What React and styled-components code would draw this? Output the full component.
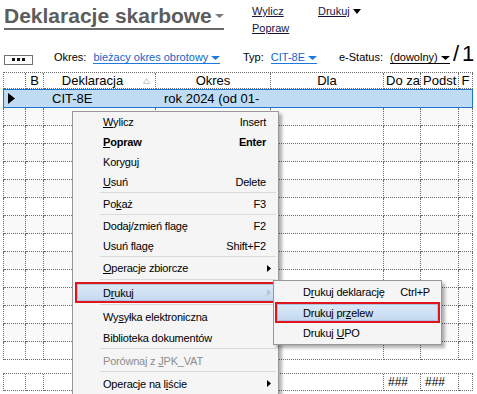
import styled, { createGlobalStyle, css } from 'styled-components';

const GlobalStyle = createGlobalStyle`
    html,
    body {
        margin: 0;
        padding: 0;
        width: 477px;
        height: 394px;
        overflow: hidden;
        background: #ffffff;
    }
    body {
        font-family: "Liberation Sans", Arial, sans-serif;
        color: #000000;
    }
`;

const COLUMNS = '22px 18px 112px 115px 113px 37px 38px 14px';
const EMPTY_ROWS = 14;

const Caret = ({ color = '#000000', w = 8, h = 4 }) => (
    <CaretSvg width={w} height={h} viewBox={`0 0 ${w} ${h}`}>
        <polygon points={`0,0 ${w},0 ${w / 2},${h}`} fill={color} />
    </CaretSvg>
);

const SubArrow = ({ color = '#000000' }) => (
    <svg width="4" height="7" viewBox="0 0 4 7">
        <polygon points="0,0 4,3.5 0,7" fill={color} />
    </svg>
);

const Item = ({ label, shortcut, arrow, ...rest }) => (
    <MenuItem {...rest}>
        <span>{label}</span>
        <Shortcut>{shortcut}</Shortcut>
        <ArrowCell>{arrow && <SubArrow color={arrow} />}</ArrowCell>
    </MenuItem>
);

const App = () => {
    const rows = Array.from({ length: EMPTY_ROWS }, (_, i) => i);
    return (
        <Page>
            <GlobalStyle />
            <TopBar>
                <Title>
                    Deklaracje skarbowe
                    <Caret color="#7a7a7a" w={9} h={4} />
                </Title>
                <LinkStack>
                    <ActionLink>Wylicz</ActionLink>
                    <ActionLink>Popraw</ActionLink>
                </LinkStack>
                <LinkStack>
                    <span>
                        <ActionLink>Drukuj</ActionLink>
                        <Caret w={8} h={5} />
                    </span>
                </LinkStack>
            </TopBar>

            <FilterRow>
                <FilterCell $width={50}>
                    <DotsButton>
                        <svg width="13" height="3" viewBox="0 0 13 3">
                            <rect x="0" y="0" width="3" height="3" fill="#111" />
                            <rect x="5" y="0" width="3" height="3" fill="#111" />
                            <rect x="10" y="0" width="3" height="3" fill="#111" />
                        </svg>
                    </DotsButton>
                </FilterCell>
                <FilterCell $width={189}>
                    <Label>Okres:</Label>
                    <Picker $blue>
                        bieżacy okres obrotowy
                        <Caret color="#1a7ae0" w={9} h={4} />
                    </Picker>
                </FilterCell>
                <FilterCell $width={96}>
                    <Label>Typ:</Label>
                    <Picker $blue>
                        CIT-8E
                        <Caret color="#1a7ae0" w={9} h={4} />
                    </Picker>
                </FilterCell>
                <FilterCell $width={112}>
                    <Label>e-Status:</Label>
                    <Picker>
                        (dowolny)
                        <Caret w={9} h={4} />
                    </Picker>
                </FilterCell>
                <PageCount>/1</PageCount>
            </FilterRow>

            <Grid>
                <HeaderRow>
                    <HeadCell />
                    <HeadCell>B</HeadCell>
                    <HeadCell $padRight={14}>
                        Deklaracja
                        <SortMark width="7" height="6" viewBox="0 0 7 6">
                            <polygon
                                points="3.5,0.5 6.5,5.5 0.5,5.5"
                                fill="none"
                                stroke="#c4c4c4"
                                strokeWidth="1"
                            />
                        </SortMark>
                    </HeadCell>
                    <HeadCell>Okres</HeadCell>
                    <HeadCell>Dla</HeadCell>
                    <HeadCell $left>Do za</HeadCell>
                    <HeadCell $left>Podst</HeadCell>
                    <HeadCell>F</HeadCell>
                </HeaderRow>

                <SelectedRow>
                    <PointerCell>
                        <svg width="7" height="11" viewBox="0 0 7 11">
                            <polygon points="0,0 7,5.5 0,11" fill="#000" />
                        </svg>
                    </PointerCell>
                    <DataCell />
                    <DataCell>CIT-8E</DataCell>
                    <DataCell>rok 2024 (od 01-</DataCell>
                    <DataCell />
                    <DataCell />
                    <DataCell />
                    <DataCell />
                </SelectedRow>

                {rows.map((i) => (
                    <BodyRow key={i} $shaded={i % 2 === 0}>
                        {Array.from({ length: 8 }, (_, c) => (
                            <GridCell key={c} />
                        ))}
                    </BodyRow>
                ))}

                <FooterRow>
                    <GridCell />
                    <GridCell />
                    <GridCell />
                    <GridCell />
                    <GridCell />
                    <SumCell>###</SumCell>
                    <SumCell>###</SumCell>
                    <GridCell />
                </FooterRow>
            </Grid>

            <ContextMenu>
                <Item label={<><Key>W</Key>ylicz</>} shortcut="Insert" />
                <Item label={<><Key>P</Key>opraw</>} shortcut="Enter" $bold />
                <Item label={<>Korygu<Key>j</Key></>} />
                <Item label={<><Key>U</Key>suń</>} shortcut="Delete" />
                <Separator />
                <Item label={<>Po<Key>k</Key>aż</>} shortcut="F3" />
                <Separator />
                <Item label={<>Dodaj/zmień fla<Key>g</Key>ę</>} shortcut="F2" />
                <Item label={<>Usuń fla<Key>g</Key>ę</>} shortcut="Shift+F2" />
                <Separator />
                <Item label={<><Key>O</Key>peracje zbiorcze</>} arrow="#000000" />
                <Separator $size={4} />
                <Item label={<>D<Key>r</Key>ukuj</>} arrow="#b8c4d0" $marked />
                <Separator $size={3} />
                <Item label={<>Wy<Key>s</Key>yłka elektroniczna</>} $tall />
                <Item label="Biblioteka dokumentów" $tall />
                <Separator />
                <Item label={<>Porównaj z <Key>J</Key>PK_VAT</>} $tall $disabled />
                <Separator />
                <Item label={<>Operacje na l<Key>i</Key>ście</>} arrow="#000000" $tall />
            </ContextMenu>

            <SubMenu>
                <Item label={<>D<Key>r</Key>ukuj deklarację</>} shortcut="Ctrl+P" />
                <Item label={<>Drukuj pr<Key>z</Key>elew</>} $marked />
                <Item label={<>Drukuj <Key>U</Key>PO</>} />
            </SubMenu>
        </Page>
    );
};

export default App;

const Page = styled.div`
    position: relative;
    width: 477px;
    height: 394px;
    overflow: hidden;
`;

const CaretSvg = styled.svg`
    display: block;
    flex: none;
    margin-left: 3px;
`;

const TopBar = styled.div`
    display: grid;
    grid-template-columns: 248px 66px 1fr;
    height: 44px;
    box-sizing: border-box;
    padding: 4px 0 0 4px;
`;

const Title = styled.div`
    display: inline-flex;
    align-items: center;
    align-self: start;
    justify-self: start;
    font-size: 21px;
    line-height: 24px;
    font-weight: bold;
    color: #5c5c5c;
    border-bottom: 2px solid #6a6a6a;
`;

const LinkStack = styled.div`
    display: flex;
    flex-direction: column;
    align-items: flex-start;
    margin-top: -1px;
    font-size: 11px;
    line-height: 17px;
    span {
        display: inline-flex;
        align-items: center;
    }
`;

const ActionLink = styled.a`
    color: #16163f;
    text-decoration: underline;
    cursor: pointer;
`;

const FilterRow = styled.div`
    display: flex;
    align-items: baseline;
    height: 20px;
    line-height: 20px;
    padding-left: 4px;
    font-size: 11px;
`;

const FilterCell = styled.div`
    display: flex;
    align-items: baseline;
    gap: 7px;
    width: ${(p) => p.$width}px;
    flex: none;
`;

const DotsButton = styled.div`
    align-self: center;
    display: flex;
    align-items: center;
    justify-content: center;
    width: 29px;
    height: 10px;
    box-sizing: border-box;
    border: 1px solid #707070;
    background: #ffffff;
`;

const Label = styled.span`
    color: #000000;
`;

const Picker = styled.span`
    display: inline-flex;
    align-items: center;
    line-height: 11px;
    color: ${(p) => (p.$blue ? '#1565c8' : '#000000')};
    border-bottom: 1px solid ${(p) => (p.$blue ? '#1a7ae0' : '#000000')};
    cursor: pointer;
`;

const PageCount = styled.span`
    margin-left: 2px;
    font-size: 22px;
    letter-spacing: 3px;
    color: #000000;
`;

const Grid = styled.div`
    margin: 8px 0 0 3px;
    width: 470px;
`;

const rowBase = css`
    display: grid;
    grid-template-columns: ${COLUMNS};
    width: 470px;
    box-sizing: border-box;
`;

const HeaderRow = styled.div`
    ${rowBase};
    border-left: 1px dotted #6a6a6a;
    border-top: 1px dotted #6a6a6a;
    background: #ffffff;
`;

const HeadCell = styled.div`
    position: relative;
    height: 16px;
    box-sizing: border-box;
    border-right: 1px dotted #6a6a6a;
    border-bottom: 1px dotted #6a6a6a;
    font-size: 13px;
    line-height: 15px;
    text-align: ${(p) => (p.$left ? 'left' : 'center')};
    padding: 0 ${(p) => p.$padRight || 0}px 0 ${(p) => (p.$left ? 2 : 0)}px;
    white-space: nowrap;
    overflow: hidden;
`;

const SortMark = styled.svg`
    position: absolute;
    right: 5px;
    top: 5px;
`;

const SelectedRow = styled.div`
    ${rowBase};
    height: 19px;
    border: 1px solid #1f74cc;
    background: #bfdcf4;
`;

const PointerCell = styled.div`
    display: flex;
    align-items: center;
    padding-left: 4px;
`;

const DataCell = styled.div`
    font-size: 13px;
    line-height: 17px;
    padding-left: 8px;
    white-space: nowrap;
    overflow: hidden;
`;

const BodyRow = styled.div`
    ${rowBase};
    border-left: 1px dotted #6a6a6a;
    background: ${(p) => (p.$shaded ? '#f9f9f9' : '#ffffff')};
`;

const GridCell = styled.div`
    height: 18px;
    box-sizing: border-box;
    border-right: 1px dotted #6a6a6a;
    border-bottom: 1px dotted #6a6a6a;
`;

const FooterRow = styled.div`
    ${rowBase};
    margin-top: 13px;
    border-left: 1px dotted #6a6a6a;
    border-top: 1px dotted #6a6a6a;
    ${GridCell} {
        height: 17px;
    }
`;

const SumCell = styled(GridCell)`
    height: 17px;
    font-size: 12px;
    line-height: 16px;
    padding-left: 4px;
`;

const menuPanel = css`
    position: absolute;
    box-sizing: border-box;
    background: #f5f5f5;
    border: 1px solid #979797;
    box-shadow: 3px 3px 3px rgba(0, 0, 0, 0.3);
    font-size: 11px;
    letter-spacing: -0.2px;
`;

const ContextMenu = styled.div`
    ${menuPanel};
    left: 72px;
    top: 111px;
    width: 207px;
    padding: 0 2px 0 2px;
`;

const SubMenu = styled.div`
    ${menuPanel};
    left: 273px;
    top: 280px;
    width: 169px;
    padding: 1px;
`;

const MenuItem = styled.div`
    display: grid;
    grid-template-columns: 1fr auto 8px;
    align-items: center;
    height: ${(p) => (p.$tall ? 21 : 20)}px;
    box-sizing: border-box;
    padding: 0 2px 0 28px;
    color: ${(p) => (p.$disabled ? '#8d8d8d' : '#000000')};
    font-weight: ${(p) => (p.$bold ? 'bold' : 'normal')};
    white-space: nowrap;
    ${(p) =>
        p.$marked &&
        css`
            height: 21px;
            padding: 0 0 0 26px;
            border: 2px solid #e3151c;
            background: linear-gradient(#dceaf8, #c3d8ef);
            box-shadow: inset 0 0 0 1px #a9c6e6;
        `}
`;

const Shortcut = styled.span`
    text-align: right;
`;

const ArrowCell = styled.span`
    display: flex;
    align-items: center;
    padding-left: 1px;
`;

const Key = styled.span`
    text-decoration: underline;
`;

const Separator = styled.div`
    height: ${(p) => p.$size || 2}px;
    margin-left: 25px;
    box-sizing: border-box;
    border-top: ${(p) => ((p.$size || 2) > 2 ? 1 : 0)}px solid transparent;
    &::before {
        content: '';
        display: block;
        height: 1px;
        background: #dadada;
    }
`;
